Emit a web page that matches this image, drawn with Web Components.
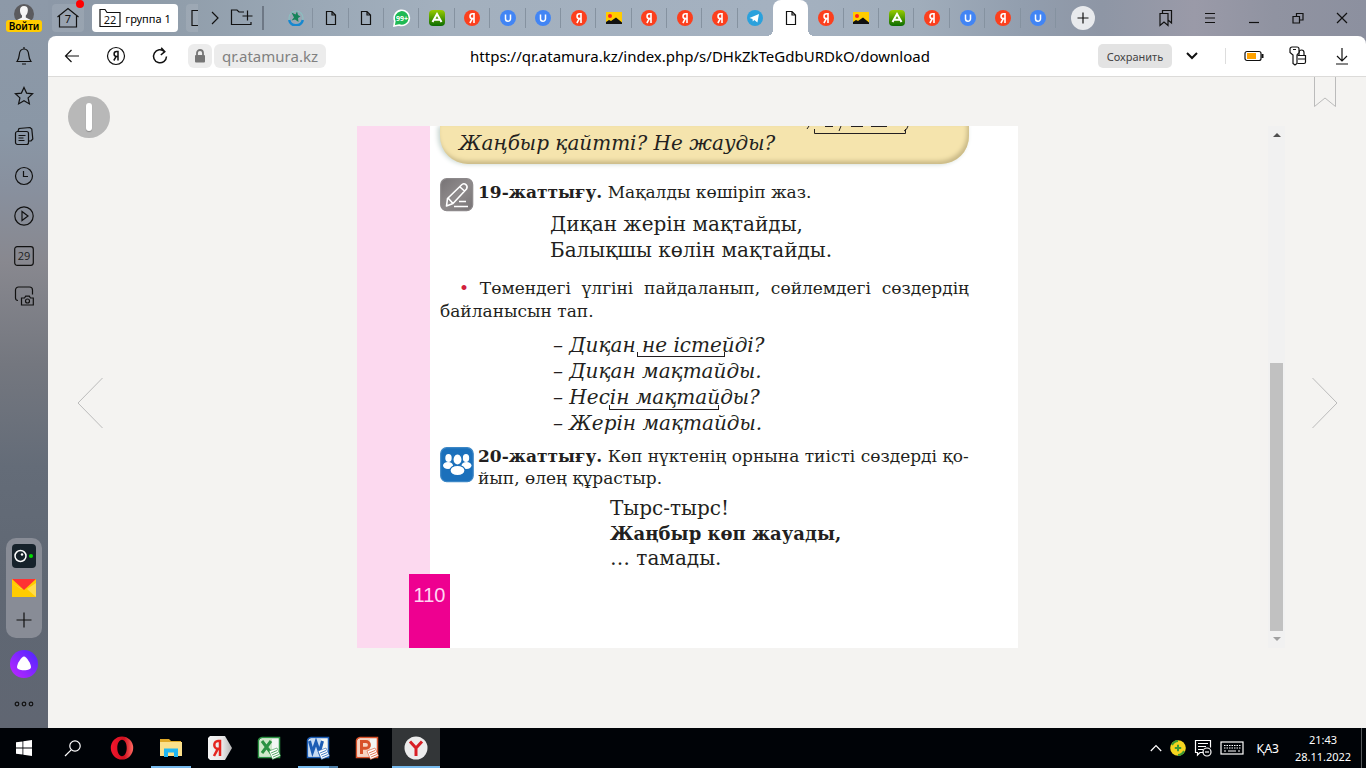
<!DOCTYPE html>
<html lang="kk">
<head>
<meta charset="utf-8">
<title>qr.atamura.kz</title>
<style>
html,body{margin:0;height:100%}
body{font-family:"Noto Sans","Open Sans",sans-serif;font-size:12px;color:#000;background:#000307}
</style>
</head>
<body>
<desktop-shell>
  <side-bar slot="side"></side-bar>
  <tab-strip slot="tabs"></tab-strip>
  <address-bar slot="address"></address-bar>
  <page-viewer slot="view">
    <book-page></book-page>
  </page-viewer>
  <task-bar slot="tasks"></task-bar>
</desktop-shell>

<script>
const svg = (w, h, body, attrs = '') =>
  `<svg width="${w}" height="${h}" viewBox="0 0 ${w} ${h}" fill="none" stroke="#111" stroke-width="1.2" aria-hidden="true" ${attrs}>${body}</svg>`;
const letter = (bg, ch) => svg(16, 16, `<circle cx="8" cy="8" r="8" fill="${bg}" stroke="none"/>` + ch);
const yaGlyph = '<path stroke="#fff" stroke-width="1.600" d="M10 13V3.700H8.500a2.400 2.400 0 0 0 0 4.900H10M8.300 8.600L5.900 13"/>';

const ICONS = {
  back: svg(16, 14, '<path d="M15 7H1.500M7.500 1L1.500 7l6 6"/>'),
  yandex: svg(20, 20, '<circle cx="10" cy="10" r="8.500"/><path stroke-width="1.500" d="M12 14.500V5.600h-1.500a2.300 2.300 0 0 0 0 4.800H12M10.200 10.400L7.800 14.500"/>'),
  reload: svg(18, 18, '<path stroke-width="1.500" d="M13.500 4.600A6.500 6.500 0 1 0 15.500 9.500M10.200 .8l3.600 3.800-4 3.400"/>'),
  lock: svg(12, 14, '<rect x="1" y="6" width="10" height="7.500" rx="1" fill="#757575" stroke="none"/><path stroke="#757575" stroke-width="1.800" d="M3 6.500V4a3 3 0 0 1 6 0v2.500"/>'),
  chevronDown: svg(14, 10, '<path stroke-width="2" d="M2 2l5 5 5-5"/>'),
  battery: svg(20, 12, '<rect x="1" y="1.500" width="16" height="9" rx="2"/><rect x="3" y="3" width="9" height="6" fill="#ffa200" stroke="none"/><path stroke-width="2" d="M18.500 4v4"/>'),
  keys: svg(20, 20, '<path d="M9.500 9.500h8v6.500a1.500 1.500 0 0 1-1.500 1.500H9.500M10 13h7.500M11 9V6.500a2.500 2.500 0 0 1 5 0v3"/><path fill="#fff" d="M2 3a2 2 0 0 1 2-2h5a2 2 0 0 1 2 2v3.500L9 9v8.500l-2 1.500-2-1.500V9L2 6.500zM5 3.500h3"/>'),
  download: svg(14, 18, '<path d="M7 1v12.500M2 9l5 5 5-5M1 17h12"/>'),
  bookmarks: svg(16, 18, '<path d="M2 4.500h8v12l-4-3.500-4 3.500zM4.500 4V1.500h9v12.500L10 11"/>'),
  menu: svg(12, 12, '<path d="M1 1.500h10M1 6h10M1 10.500h10"/>'),
  minimize: svg(12, 12, '<path d="M1 10.500h10"/>'),
  restore: svg(12, 12, '<path d="M1 4.500h6.500V11H1zM4.500 4.500V1.500H11V8H7.500"/>'),
  close: svg(12, 12, '<path d="M1 1l10 10M11 1L1 11"/>'),
  chevronRight: svg(10, 14, '<path d="M2 1l6 6-6 6"/>'),
  folderPlus: svg(24, 18, '<path d="M14 3H9L7 1H1.500v14.500H21V13M17.500 1.500v10M12.500 7h10"/>'),
  doc: svg(12, 16, '<path d="M1.500 1.500h5.500l3.500 3.500v9.500h-9zM7 1.500V5h3.500"/>'),
  ya: letter('#fc3f1d', yaGlyph),
  u: letter('#4285f4', '<path stroke="#fff" stroke-width="1.500" d="M5.500 4.500v4.200a2.500 2.500 0 0 0 5 0V4.500"/>'),
  telegram: svg(16, 16, '<circle cx="8" cy="8" r="8" fill="#2ba1dc" stroke="none"/><path fill="#fff" stroke="none" d="M2.500 8l9.500-4-1.600 8.500L7.300 10 5.800 11.500 5.500 9z"/>'),
  atamura: svg(16, 16, '<circle cx="8" cy="8" r="7" stroke="#8bbfc0"/><path stroke="#1688d0" stroke-width="2.500" d="M1.200 10a7 7 0 0 0 13.600 0"/><path fill="#16845a" stroke="none" d="M3.500 2.500l4 2 1.500-3 1 3.500 2.500 1.500-2.500 1.500 .5 4-3.500-2.500-3.500 1 2.500-3z"/>'),
  photo: svg(16, 12, '<path fill="#fc0" stroke="none" d="M0 0h16v12H0z"/><circle cx="4" cy="4" r="2" fill="#f22" stroke="none"/><path fill="#111" stroke="none" d="M0 12V10l3-2 2 1 5-3.500 6 5V12z"/>'),
  green: svg(16, 16, '<defs><linearGradient id="g" x2="0" y2="1"><stop stop-color="#9c0"/><stop offset="1" stop-color="#096b00"/></linearGradient></defs><rect width="16" height="16" rx="4" fill="url(#g)" stroke="none"/><path stroke="#fff" stroke-width="2" d="M3.500 12L8 4l4.500 8M5.500 9.800h5"/>'),
  whatsapp: svg(18, 18, '<path fill="#1fb954" stroke="#fff" stroke-width="1.600" d="M1 17l.8-5A7.600 7.600 0 1 1 6 16z"/><text x="9" y="12" text-anchor="middle" font-family="Noto Sans" font-size="7" font-weight="700" fill="#fff" stroke="none">99+</text>'),
  avatar: svg(20, 20, '<circle cx="10" cy="10" r="10" fill="#5b5b5e" stroke="none"/><path fill="#f6f6f6" stroke="none" d="M10 2c3 0 4.200 2 3.800 5-.2 2-1 3.500-2 4.500v2l5 2.500A10 10 0 0 1 3 16l5-2.500v-2c-1-1-1.800-2.500-2-4.500C5.800 4 7 2 10 2z"/>'),
  bell: svg(18, 20, '<path d="M9 1v2M2 15.500h14c-2-2.500-2-4-2.300-7C13.400 5 11.500 3 9 3S4.600 5 4.300 8.500C4 11.500 4 13 2 15.500zM7 18h4"/>'),
  star: svg(20, 20, '<path d="M10 1.500l2.600 5.600 6 .7-4.500 4.100 1.300 6L10 14.800 4.600 17.900l1.300-6L1.400 7.800l6-.7z"/>'),
  cards: svg(20, 20, '<rect x="1.500" y="5.500" width="13" height="13" rx="2"/><path d="M4 5l1-2.500 11-1 1.800 1.500 1 10-1.800 2h-2M4.500 9.500h7M4.500 12h5M4.500 14.500h6"/>'),
  clock: svg(20, 20, '<circle cx="10" cy="10" r="8.500"/><path d="M9.500 5v5.500H14"/>'),
  play: svg(20, 20, '<circle cx="10" cy="10" r="9.200"/><path d="M8 5.500v9l6-4.500z"/>'),
  calendar: svg(20, 20, '<rect x=".7" y=".7" width="18.600" height="18.600" rx="2.500"/><text x="10" y="14" text-anchor="middle" font-family="Open Sans" font-size="11" fill="#222" stroke="none">29</text>'),
  shot: svg(20, 20, '<path d="M4 14.500C2 14.500 1.500 13 1.500 12V4a3 3 0 0 1 3-3h11a3 3 0 0 1 3 3v4.500"/><path d="M7.500 12h3l1.200-1.800h3.600L16.500 12h2.800v7H7.500z"/><circle cx="13.500" cy="15" r="2"/>'),
  camera: svg(24, 24, '<rect width="24" height="24" rx="4" fill="#16222b" stroke="none"/><circle cx="8.500" cy="12" r="5.500" stroke="#fff" stroke-width="1.500"/><circle cx="10" cy="10.500" r="1.200" fill="#fff" stroke="none"/><circle cx="19" cy="12" r="2" fill="#0d0" stroke="none"/>'),
  mail: svg(24, 18, '<path fill="#fc0" stroke="none" d="M0 0h24v18H0z"/><path fill="#ffdc4d" stroke="none" d="M0 4l12 8L24 4v14z"/><path fill="#fc0" stroke="none" d="M0 18l9-8h6l9 8z"/><path fill="#f33" stroke="none" d="M0 0h24L12 11z"/>'),
  plus: svg(16, 16, '<path d="M8 .5v15M.5 8h15"/>'),
  smallPlus: svg(12, 12, '<path d="M6 .5v11M.5 6h11"/>'),
  alice: svg(28, 28, '<defs><linearGradient id="a" x1="1" x2="0" y2="1"><stop stop-color="#4a26ff"/><stop offset="1" stop-color="#c026ff"/></linearGradient></defs><circle cx="14" cy="14" r="14" fill="url(#a)" stroke="none"/><path fill="#fff" stroke="none" d="M14 6.500c2.600 0 7 7.500 7 10.500 0 2-2.500 3.200-7 3.200S7 19 7 17c0-3 4.400-10.500 7-10.500z"/>'),
  dots: svg(20, 6, '<circle cx="3" cy="3" r="1.800"/><circle cx="10" cy="3" r="1.800"/><circle cx="17" cy="3" r="1.800"/>'),
  windows: svg(16, 16, '<path fill="#fff" stroke="none" d="M0 2.300l6.500-.9v6.200H0zM7.300 1.300L16 0v7.600H7.300zM0 8.400h6.500v6.200L0 13.700zM7.300 8.400H16V16l-8.700-1.300z"/>'),
  search: svg(18, 18, '<circle cx="11" cy="7" r="5.200" stroke="#fff"/><path stroke="#fff" d="M7.200 10.800L1 17"/>'),
  opera: svg(24, 24, '<defs><linearGradient id="o"><stop stop-color="#f3162d"/><stop offset=".6" stop-color="#d0101f"/><stop offset="1" stop-color="#ff6a62"/></linearGradient></defs><path fill="url(#o)" stroke="none" fill-rule="evenodd" d="M12 .5a11.200 11.500 0 1 0 0 23 11.200 11.500 0 1 0 0-23zm0 3.300c2.800 0 4.700 3.600 4.700 8.200s-1.900 8.200-4.700 8.200S7.300 16.600 7.300 12 9.200 3.800 12 3.800z"/>'),
  explorer: svg(22, 20, '<path fill="#e0a928" stroke="none" d="M0 1h9l2 2h10v4H0z"/><path fill="#fbe08b" stroke="none" d="M0 4h22v14H0z"/><path fill="#21b7f3" stroke="none" d="M4 10.500h14V19h-4v-4.500H8V19H4z"/>'),
  yaSearch: svg(24, 24, '<defs><linearGradient id="y" x2="1"><stop stop-color="#f4f4f4"/><stop offset=".6" stop-color="#e8e8e8"/><stop offset="1" stop-color="#b5b5b5"/></linearGradient></defs><path fill="url(#y)" stroke="none" d="M2 0h15l7 12-7 12H2l-2-2V2z"/><path stroke="#e52620" stroke-width="2.500" d="M12 20V5h-2a3.500 3.700 0 0 0 0 7.800h2M9.800 12.800L6 20"/>'),
  yandexBrowser: svg(24, 24, '<circle cx="12" cy="12" r="11.500" fill="#ececec" stroke="none"/><path stroke="#d81f26" stroke-width="3" d="M6 5.500l6 6.500 6-6.500M12 11.500V20"/>'),
  tray: svg(12, 8, '<path stroke="#fff" d="M.8 7L6 1.500 11.200 7"/>'),
  shield: svg(16, 16, '<circle cx="8" cy="8" r="7.800" fill="#f6d51f" stroke="none"/><path stroke="#3d9b35" stroke-width="2" d="M2 5a7 7 0 0 1 6-4M14 11a7 7 0 0 1-6 4M8 4.800v6.400M4.800 8h6.400"/>'),
  notes: svg(18, 18, '<path stroke="#fff" d="M9.500 13.500H6L3.500 16v-2.500H1.500v-12h15v7M4 4.500h10M4 7.500h8M4 10.500h5"/><circle cx="13" cy="13" r="4" stroke="#fff"/><path stroke="#fff" d="M11 13h4"/>'),
  keyboard: svg(24, 14, '<rect x="1" y="1" width="22" height="12" stroke="#fff"/><path stroke="#fff" stroke-dasharray="1.500 1" d="M4 4.500h16.500M4 7h16.500"/><path stroke="#fff" d="M4 10h2M8 10h8M18 10h2"/>'),
  pencil: svg(34, 34, '<defs><linearGradient id="p" x2="1" y2="1"><stop stop-color="#777375"/><stop offset=".5" stop-color="#8f8b8c"/><stop offset="1" stop-color="#777375"/></linearGradient></defs><rect x=".7" y=".7" width="32" height="32" rx="6" fill="url(#p)" stroke="#8d898b"/><path stroke="#fff" stroke-width="1.600" stroke-linejoin="round" d="M6.500 28l1-7.500L22 6.500c2.500-2 6.500 1 4.500 4.500L13 25.500zM20 9l4.500 4M8.500 20.500l4.500 5M14 28.500h14M19 23.500h7"/>'),
  people: svg(34, 36, '<rect x=".7" y=".7" width="32.500" height="34" rx="6" fill="#1b70bb" stroke="#3c87c6"/><g fill="#fff" stroke="none"><ellipse cx="8.500" cy="11" rx="3.200" ry="4"/><ellipse cx="26" cy="11" rx="3.200" ry="4"/><ellipse cx="8" cy="18.500" rx="5" ry="3.500"/><ellipse cx="26.500" cy="18.500" rx="5" ry="3.500"/></g><g fill="#fff" stroke="#1b70bb"><ellipse cx="17.500" cy="23.500" rx="7.500" ry="5.200"/><ellipse cx="17.500" cy="12.500" rx="4.600" ry="5.600"/></g>')
};
const office = (c, d, g) => svg(24, 24, `<path fill="#f3f6f4" stroke="${c}" stroke-width="1.500" d="M1.500 4.500Q2 2 5 1.500h17.500v20H1.500z"/><path fill="${d}" stroke="none" d="M2.500 5Q3 3 6 2.500h9V20H2.500z" opacity=".7"/><path stroke="${c}" stroke-width="3" d="${g}"/><path fill="#fff" stroke="${c}" stroke-width=".6" d="M12 15l8-3 3.500 8-8 3.500z"/><path stroke="${c}" stroke-width=".8" d="M14 17l6-2.500M15 19l6-2.500M16 21l6-2.500"/>`);
ICONS.excel = office('#2b9242', '#bfe3b6', 'M5 5l9 12M14 5L5 17');
ICONS.word = office('#1b5cb4', '#b4d2f4', 'M3.500 5L6.500 16 10 6l3.500 10L16.500 5');
ICONS.powerpoint = office('#d8522a', '#f7c6ab', 'M6.500 18V5.500h4.500a3.400 3.400 0 0 1 0 6.800H6.500');

const BASE = `<style>
*{box-sizing:border-box}
button{display:flex;align-items:center;justify-content:center;flex:none;margin:0;padding:0;border:0;background:none;font:inherit;color:inherit}
svg{display:block;flex:none}
</style>`;
const define = (name, html) => customElements.define(name, class extends HTMLElement {
  constructor() {
    super();
    this.attachShadow({ mode: 'open' }).innerHTML = BASE + (typeof html === 'function' ? html(this) : html);
  }
});
const btn = (icon, label, cls = '') => `<button class="${cls}" aria-label="${label}">${ICONS[icon]}</button>`;

define('desktop-shell', `<style>
:host{display:grid;grid-template:36px 41px minmax(0,1fr) 40px / 48px minmax(0,1fr);min-height:100vh}
slot{display:contents}
::slotted([slot=side]){grid-area:1/1/4/2}
::slotted([slot=tabs]){grid-area:1/2}
::slotted([slot=address]){grid-area:2/2}
::slotted([slot=view]){grid-area:3/2}
::slotted([slot=tasks]){grid-area:4/1/5/3}
</style><slot name="side"></slot><slot name="tabs"></slot><slot name="address"></slot><slot name="view"></slot><slot name="tasks"></slot>`);

define('side-bar', `<style>
:host{display:flex;flex-direction:column;align-items:center;padding-bottom:4px;background:linear-gradient(180deg,#8d99a8 0,#8a97a6 18%,#88909e 26%,#88888f 36%,#74777f 50%,#646c78 64%,#5f6773 80%,#606672 100%)}
.user{width:36px;height:36px;flex-direction:column;padding-top:4px;justify-content:flex-start}
.user span{width:36px;height:12px;margin-top:-4px;border-radius:3px;background:#ffcc00;font-size:10px;line-height:12px;font-weight:600;position:relative}
.cell{width:48px;height:40px}
.apps{display:flex;flex-direction:column;align-items:center;width:36px;margin-top:auto;margin-bottom:6px;padding:2px 0;border-radius:10px;background:#888c96}
.apps button{width:36px;height:32px}
</style>
<button class="user">${ICONS.avatar}<span>Войти</span></button>
${[['bell', 'Уведомления'], ['star', 'Избранное'], ['cards', 'Коллекции'], ['clock', 'История'], ['play', 'Видео'], ['calendar', 'Календарь'], ['shot', 'Скриншот']].map(([i, l]) => btn(i, l, 'cell')).join('')}
<div class="apps">${btn('camera', 'Камера')}${btn('mail', 'Почта')}${btn('plus', 'Добавить')}</div>
${btn('alice', 'Алиса', 'cell')}${btn('dots', 'Ещё', 'cell')}`);

define('browser-tab', el => `<style>
:host{display:flex;flex:1 1 0;min-width:0;position:relative}
button{width:100%;height:36px}
:host([line])::after{content:"";position:absolute;right:0;top:8px;height:20px;width:1px;background:#8592a0}
:host([active]) button{background:#fff;border-radius:8px 8px 0 0}
:host([active])::before{content:"";position:absolute;bottom:0;left:-6px;right:-6px;height:6px;background:radial-gradient(circle at 0 0,transparent 6px,#fff 6px) left/6px 6px no-repeat,radial-gradient(circle at 100% 0,transparent 6px,#fff 6px) right/6px 6px no-repeat}
</style>${btn(el.getAttribute('icon'), 'Вкладка ' + el.getAttribute('icon'))}`);

const TABS = 'atamura doc doc whatsapp green ya u u ya photo ya ya ya telegram doc* ya photo green ya u ya u'.split(' ');
define('tab-strip', `<style>
:host{display:flex;align-items:center;padding:0 2px 0 4px;background:linear-gradient(90deg,#8c98a7 0,#909daa 9%,#9aa8b6 20%,#a3b0be 30%,#a4b1c0 56%,#a0adbb 66%,#929eae 74%,#8e96a5 80%,#9a9aa8 87%,#9093a1 93%,#8c909f 100%)}
.home,.group,.cut{height:28px;border-radius:4px}
.home{position:relative;width:32px;background:rgba(255,255,255,.1)}
.home::after{content:"";position:absolute;right:0;top:-4px;width:8px;height:8px;border-radius:4px;background:#f00}
.group{width:86px;margin-left:8px;gap:4px;background:#fff;font-size:11px}
.cut{width:12px;margin-left:8px;justify-content:flex-end;background:rgba(255,255,255,.1);border-radius:4px 0 0 4px}
.next{width:34px;height:36px}.add{width:20px;height:36px}
i{width:2px;height:24px;margin:0 14px 0 10px;background:#6e7885}
.tabs{display:flex;flex:1;min-width:0}
.new{width:24px;height:24px;margin:0 49px 0 15px;border-radius:12px;background:#e8eaed}
.win{width:44px;height:36px}
</style>
<button class="home" aria-label="Домой">${svg(24, 22, '<path d="M1.500 10L12 1.500 22.500 10M3.500 9v11h17V9"/><text x="12" y="16" text-anchor="middle" font-family="Noto Sans" font-size="11" fill="#111" stroke="none">7</text>')}</button>
<button class="group">${svg(22, 20, '<path d="M1 18.500V1.500h5l2 3h13v14z"/><text x="11" y="16" text-anchor="middle" font-family="Noto Sans" font-size="11" fill="#111" stroke="none">22</text>')}<span>группа 1</span></button>
<button class="cut" aria-label="Группа">${svg(7, 18, '<path d="M7 1.500H1v15h6"/>')}</button>
${btn('chevronRight', 'Далее', 'next')}${btn('folderPlus', 'Новая группа', 'add')}<i></i>
<div class="tabs">${TABS.map((t, n) => `<browser-tab icon="${t.replace('*', '')}"${t.endsWith('*') ? ' active' : n === 13 ? '' : ' line'}></browser-tab>`).join('')}</div>
${btn('smallPlus', 'Новая вкладка', 'new')}
${[['bookmarks', 'Закладки'], ['menu', 'Меню'], ['minimize', 'Свернуть'], ['restore', 'Развернуть'], ['close', 'Закрыть']].map(([i, l]) => btn(i, l, 'win')).join('')}`);

define('address-bar', `<style>
:host{display:block;background:linear-gradient(90deg,#8d99a8 50%,#8c909f 50%)}
.bar{display:flex;align-items:center;height:41px;padding:0 2px;background:#fff;border-bottom:1px solid #dcdbd9;border-radius:8px 8px 0 0}
.nav{width:44px;height:40px}
.lock{width:24px;height:24px;margin-left:6px;border-radius:6px;background:#ececec}
.host{height:24px;margin-left:2px;padding:0 8px;border-radius:6px;background:#ececec;color:#808080;font-size:15px;line-height:24px;text-decoration:none}
input{flex:1;min-width:0;height:32px;border:0;outline:0;padding:0 24px 0 0;background:none;text-align:center;font-family:"Noto Sans",sans-serif;font-size:15px;color:#000}
.save{width:74px;height:24px;border-radius:5px;background:#e3e3e3;color:#444;font-size:11px}
.more{width:40px;height:40px}
i{width:1px;height:16px;margin:0 6px 0 13px;background:#ddd}
</style>
<div class="bar">${btn('back', 'Назад', 'nav')}${btn('yandex', 'Яндекс', 'nav')}${btn('reload', 'Обновить', 'nav')}${btn('lock', 'Защита', 'lock')}
<a class="host" href="#">qr.atamura.kz</a>
<input type="text" aria-label="Адрес" value="https://qr.atamura.kz/index.php/s/DHkZkTeGdbURDkO/download">
<button class="save">Сохранить</button>${btn('chevronDown', 'Ещё', 'more')}<i></i>${btn('battery', 'Батарея', 'nav')}${btn('keys', 'Пароли', 'nav')}${btn('download', 'Загрузки', 'nav')}</div>`);

define('page-viewer', `<style>
:host{display:grid;grid-template-columns:59px minmax(0,1fr) 81px;background:#f4f3f1}
.left,.right{display:grid;align-items:center;position:relative}
.left button,.right button{height:52px}
.left .turn{justify-content:flex-end;padding-right:4px}
.right .turn{justify-content:flex-end;padding-right:28px}
.badge{position:absolute;left:20px;top:19px;width:42px;height:42px;border-radius:21px;background:#b8b8b8;display:grid;place-items:center}
.badge::after{content:"";width:6px;height:28px;border-radius:3px;background:#fff;box-shadow:0 1px 1px #888}
.mark{position:absolute;right:29px;top:0}
.reader{display:flex;margin:49px 0 80px}
.sheet{flex:1;min-width:0;display:flex;justify-content:center}
.scroll{display:flex;flex-direction:column;align-items:center;justify-content:space-between;width:17px;padding:7px 0;background:#f1f1f1}
.track{display:flex;align-items:flex-end;flex:1;margin:6px 0}
.thumb{width:13px;height:55%;background:#c1c1c1}
</style>
<div class="left"><div class="badge"></div><button class="turn" aria-label="Предыдущая страница">${svg(26, 52, '<path stroke="#bbb" stroke-width="1" d="M25.500 1L1 26l24.500 25"/>')}</button></div>
<div class="reader"><div class="sheet"><slot></slot></div>
<div class="scroll">${svg(8, 4, '<path fill="#505050" stroke="none" d="M0 4l4-4 4 4z"/>')}<div class="track"><div class="thumb"></div></div>${svg(8, 4, '<path fill="#a0a0a0" stroke="none" d="M0 0l4 4 4-4z"/>')}</div></div>
<div class="right"><svg class="mark" width="24" height="31" fill="none" stroke="#bbb" aria-hidden="true"><path d="M1.500 0v29.500L12 21l10.500 8.500V0"/></svg><button class="turn" aria-label="Следующая страница">${svg(26, 52, '<path stroke="#bbb" stroke-width="1" d="M.5 1L25 26 .5 51"/>')}</button></div>`);

define('book-page', `<style>
:host{display:grid;grid-template-columns:73px minmax(0,1fr);width:100%;max-width:661px;min-height:522px;position:relative;overflow:hidden;background:#fff;color:#231f20;font-family:"DejaVu Serif",serif;font-size:17px}
.margin{background:#fcd9ef}
.num{position:absolute;left:52px;bottom:0;width:41px;height:74px;background:#ee0090;color:#ffd5f3;font:20px/42px "Liberation Sans",sans-serif;text-align:center}
article{padding:0 49px 0 10px}
p{margin:0}
.rule{height:38px;padding:4px 19px 0;border-radius:0 0 28px 28px;background:#f5e4ad;box-shadow:inset -2px -3px 4px #c9b987,-2px 0 5px #c5d3ce;font-size:20px;line-height:26px;font-style:italic;position:relative}
.rule svg{position:absolute;right:54px;top:0}
.task{display:grid;grid-template-columns:34px minmax(0,1fr);column-gap:4px;line-height:22px;white-space:nowrap}
.t1{margin-top:14px}.t1 p{padding-top:3px}
.verse{font-size:20px;line-height:26px}
.v1{margin:-1px 0 0 110px}
.note{margin-top:14px;line-height:23px}
.note .line{display:block}
.first{padding-left:19px;text-align:justify;text-align-last:justify}
.dot{color:#d2203c}
.dialog{margin:9px 0 0 113px;font-style:italic;font-size:20px;line-height:26px;position:relative}
.link{position:absolute;height:5px;border:1px solid #231f20;border-top:0}
.l1{left:84px;top:20px;width:88px}.l2{left:56px;top:73px;width:110px}
.t2{margin-top:9px}.t2 svg{margin-top:2px}
.v2{margin:7px 0 0 170px;line-height:25px}
.v2 b{font-size:18px}
</style>
<div class="margin"></div>
<article>
<p class="rule">Жаңбыр қайтті? Не жауды?<svg width="110" height="10" fill="none" stroke="#231f20" aria-hidden="true"><path d="M9.500 3v4.500h91V3M4 0L2 3M36 0l-2 5M103 0q-1 4-4 5M20 .5h8M46 .5h12M66 .5h16"/></svg></p>
<section class="task t1">${ICONS.pencil}<p><b>19-жаттығу.</b> Мақалды көшіріп жаз.</p></section>
<div class="verse v1"><p>Диқан жерін мақтайды,</p><p>Балықшы көлін мақтайды.</p></div>
<p class="note"><span class="line first"><span class="dot">•</span> Төмендегі үлгіні пайдаланып, сөйлемдегі сөздердің</span><span class="line">байланысын тап.</span></p>
<div class="dialog"><p>– Диқан не істейді?</p><p>– Диқан мақтайды.</p><p>– Несін мақтайды?</p><p>– Жерін мақтайды.</p><i class="link l1"></i><i class="link l2"></i></div>
<section class="task t2">${ICONS.people}<p><b>20-жаттығу.</b> Көп нүктенің орнына тиісті сөздерді қо-<br>йып, өлең құрастыр.</p></section>
<div class="verse v2"><p>Тырс-тырс!</p><p><b>Жаңбыр көп жауады,</b></p><p>… тамады.</p></div>
</article>
<div class="num">110</div>`);

define('task-bar', `<style>
:host{display:flex;align-items:center;height:40px;background:#000307;color:#fff}
.apps{display:flex;gap:1px}
.apps button{width:48px;height:40px;position:relative}
.run::after{content:"";position:absolute;bottom:0;left:4px;right:4px;height:2px;background:#76b9ed}
.multi::after{background:linear-gradient(90deg,#76b9ed 78%,#4e7fa8 78%)}
.on{background:#333638}.on::after{left:0;right:0}
.tray{display:flex;align-items:center;gap:8px;margin-left:auto}
.lang{margin:0 6px 0 4px;font-size:12px}
.clock{width:60px;font-size:11px;line-height:17px;text-align:center;display:block}
i{width:1px;height:40px;margin:0 4px 0 0;background:#55585b}
</style>
<div class="apps">${[['windows', 'Пуск', ''], ['search', 'Поиск', ''], ['opera', 'Opera', ''], ['explorer', 'Проводник', 'run'], ['yaSearch', 'Яндекс', ''], ['excel', 'Excel', ''], ['word', 'Word', 'run multi'], ['powerpoint', 'PowerPoint', ''], ['yandexBrowser', 'Яндекс Браузер', 'run on']].map(([i, l, c]) => btn(i, l, c)).join('')}</div>
<div class="tray">${btn('tray', 'Значки')}${btn('shield', 'Защита')}${btn('notes', 'Уведомления')}${btn('keyboard', 'Клавиатура')}<button class="lang">ҚАЗ</button><button class="clock">21:43<br>28.11.2022</button><i></i></div>`);
</script>
</body>
</html>
